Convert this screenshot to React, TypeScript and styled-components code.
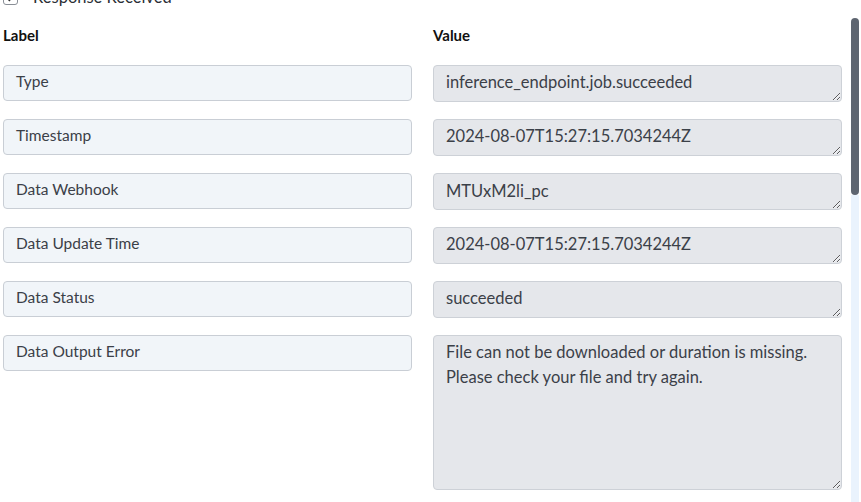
import { useEffect, useRef } from "react";
import styled, { createGlobalStyle } from "styled-components";

const GlobalStyle = createGlobalStyle`
  html, body {
    margin: 0;
    padding: 0;
    overflow: hidden;
    background: #ffffff;
  }
  * {
    box-sizing: border-box;
  }
`;

const Page = styled.div`
  display: flex;
  height: 502px;
  font-family: Lato, "Noto Sans", sans-serif;
  color: #3b4048;
`;

const Main = styled.div`
  flex: 1;
  min-width: 0;
  overflow-y: auto;
  scrollbar-width: none;
  &::-webkit-scrollbar {
    display: none;
  }
`;

// scroll rail drawn at the right edge of the panel
const Rail = styled.div`
  width: 10px;
  flex: none;
  display: flex;
  flex-direction: column;
  padding-right: 2px;
  padding-top: 18px;
`;

const Thumb = styled.div`
  height: 177px;
  flex: none;
  background: #5e6570;
  border-radius: 4px;
`;

const Track = styled.div`
  flex: 1;
  background: #eaf3fd;
`;

const Content = styled.div`
  padding: 38px 9px 880px 3px;
`;

const CheckRow = styled.label`
  display: flex;
  align-items: center;
  gap: 15px;
  height: 20px;
  font-size: 16.5px;
  color: #2b2f36;
`;

const CheckBox = styled.span`
  width: 15px;
  height: 15px;
  border: 1px solid #8a8f97;
  border-radius: 3px;
  background: #ffffff;
  display: flex;
  align-items: center;
  justify-content: center;
`;

const Grid = styled.div`
  display: grid;
  grid-template-columns: 1fr 1fr;
  column-gap: 21px;
  row-gap: 17px;
  margin-top: 18px;
`;

const Heading = styled.div`
  font-size: 15px;
  font-weight: 700;
  line-height: 20px;
  color: #111111;
  margin-bottom: 3px;
`;

const LabelBox = styled.div`
  height: 36px;
  padding: 3px 12px 0;
  background: #f1f5f9;
  border: 1px solid #c9ced5;
  border-radius: 4px;
  font-size: 15.5px;
  line-height: 24px;
  color: #3b4048;
  white-space: nowrap;
  overflow: hidden;
`;

const ValueBox = styled.textarea<{ $tall: boolean }>`
  display: block;
  width: 100%;
  height: ${(p) => (p.$tall ? 155 : 37)}px;
  padding: 4px 12px 5px;
  margin: 0;
  background: #e5e7eb;
  border: 1px solid #cdd1d7;
  border-radius: 4px;
  font-family: inherit;
  font-size: 16.5px;
  line-height: 25px;
  color: #3b4048;
  resize: vertical;
  outline: none;
  overflow: hidden;
`;

const fields = [
  { label: "Type", value: "inference_endpoint.job.succeeded", tall: false },
  { label: "Timestamp", value: "2024-08-07T15:27:15.7034244Z", tall: false },
  {
    label: "Data Webhook",
    value: "https://hooks.myapp.com/api/v1/endpoint/job/events/\nMTUxM2li_pc",
    tall: false,
  },
  { label: "Data Update Time", value: "2024-08-07T15:27:15.7034244Z", tall: false },
  { label: "Data Status", value: "succeeded", tall: false },
  {
    label: "Data Output Error",
    value:
      "File can not be downloaded or duration is missing.\nPlease check your file and try again.",
    tall: true,
  },
];

function Value({ value, tall }: { value: string; tall: boolean }) {
  const ref = useRef<HTMLTextAreaElement>(null);
  useEffect(() => {
    // short fields keep the end of a long value in view
    if (ref.current && !tall) ref.current.scrollTop = ref.current.scrollHeight;
  }, [tall]);
  return <ValueBox ref={ref} $tall={tall} value={value} readOnly />;
}

export default function App() {
  const mainRef = useRef<HTMLDivElement>(null);
  useEffect(() => {
    if (mainRef.current) mainRef.current.scrollTop = 51;
  }, []);

  return (
    <>
      <GlobalStyle />
      <Page>
        <Main ref={mainRef}>
          <Content>
            <CheckRow>
              <CheckBox>
                <svg width="11" height="11" viewBox="0 0 10 10">
                  <path d="M1.5 5.2 L4 7.6 L8.6 2.4" stroke="#333" strokeWidth="1.4" fill="none" />
                </svg>
              </CheckBox>
              Response Received
            </CheckRow>
            <Grid>
              <Heading>Label</Heading>
              <Heading>Value</Heading>
              {fields.map((f) => [
                <LabelBox key={f.label + "-l"}>{f.label}</LabelBox>,
                <Value key={f.label + "-v"} value={f.value} tall={f.tall} />,
              ])}
            </Grid>
          </Content>
        </Main>
        <Rail>
          <Thumb />
          <Track />
        </Rail>
      </Page>
    </>
  );
}
